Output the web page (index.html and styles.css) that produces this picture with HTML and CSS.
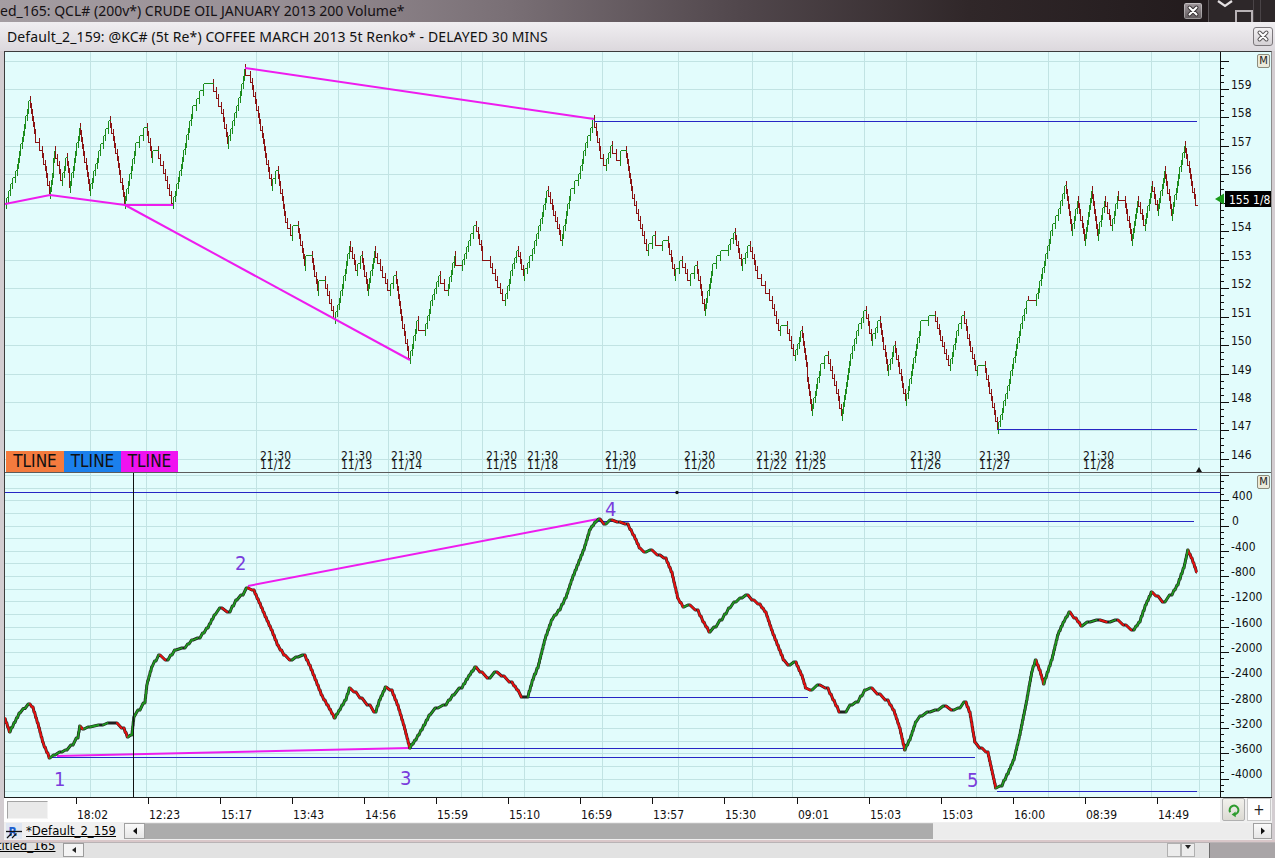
FILE: index.html
```html
<!DOCTYPE html>
<html lang="en">
<head>
<meta charset="utf-8">
<title>Default_2_159 - Coffee Renko</title>
<link rel="stylesheet" href="styles.css">
</head>
<body>
<div class="screen">
  <header class="outer-title">
    <span class="outer-text">ed_165: QCL# (200v*) CRUDE OIL JANUARY 2013 200 Volume*</span>
    <div class="outer-close">
      <svg viewBox="0 0 18 16" width="18" height="16"><path class="x-dark" d="M5.5 4.5L12.5 11.5M12.5 4.5L5.5 11.5"/><path class="x-light" d="M5.5 4.5L12.5 11.5M12.5 4.5L5.5 11.5"/></svg>
    </div>
    <div class="other-win">
      <svg viewBox="0 0 67 22" width="67" height="22">
        <path d="M0.5 0V22" stroke="#5a5457"/>
        <path d="M10 1L17 6L24 1" fill="none" stroke="#e4e0e2" stroke-width="2.2"/>
        <rect x="28" y="11" width="16" height="12" fill="none" stroke="#b8b2b5" stroke-width="2"/>
        <path d="M45.5 0V22M52.5 0V22" stroke="#4a4447"/>
      </svg>
    </div>
  </header>

  <div class="window">
    <div class="inner-title">
      <span class="inner-title-text">Default_2_159: @KC# (5t Re*) COFFEE MARCH 2013 5t Renko* - DELAYED 30 MINS</span>
      <div class="inner-close">
        <svg viewBox="0 0 18 17" width="18" height="17"><path class="x-dark2" d="M5.5 4.5L12.5 11.5M12.5 4.5L5.5 11.5"/><path class="x-light" d="M5.5 4.5L12.5 11.5M12.5 4.5L5.5 11.5"/></svg>
      </div>
    </div>

    <div class="body-frame">
      <div class="chart">
        <div class="pane pane-upper">
          <svg class="plot" viewBox="5 52 1215 420" width="1215" height="420">
            <g id="ugrid" class="grid"></g>
            <g id="ubars"></g>
            <polyline class="mag" points="5,204 50,195 125,205 173,205"/>
            <line class="mag" x1="125" y1="205" x2="410" y2="360"/>
            <line class="mag" x1="245" y1="68" x2="594" y2="119"/>
            <path class="navy" d="M594 121.5H1197M997 429.5H1197"/>
            <g class="dates">
              <text x="260" y="460">21:30</text><text x="260" y="469">11/12</text>
              <text x="341" y="460">21:30</text><text x="341" y="469">11/13</text>
              <text x="391" y="460">21:30</text><text x="391" y="469">11/14</text>
              <text x="486" y="460">21:30</text><text x="486" y="469">11/15</text>
              <text x="527" y="460">21:30</text><text x="527" y="469">11/18</text>
              <text x="605" y="460">21:30</text><text x="605" y="469">11/19</text>
              <text x="684" y="460">21:30</text><text x="684" y="469">11/20</text>
              <text x="756" y="460">21:30</text><text x="756" y="469">11/22</text>
              <text x="795" y="460">21:30</text><text x="795" y="469">11/25</text>
              <text x="910" y="460">21:30</text><text x="910" y="469">11/26</text>
              <text x="979" y="460">21:30</text><text x="979" y="469">11/27</text>
              <text x="1083" y="460">21:30</text><text x="1083" y="469">11/28</text>
            </g>
            <path class="mark" d="M1196 472L1199 467L1202 472Z"/>
          </svg>
          <svg class="axis" viewBox="1220 52 51 420" width="51" height="420">
            <path class="axis-line" d="M1220.5 52V472"/>
            <g id="uticks" class="ticks"></g>
            <g class="axis-lbl">
              <text x="1231" y="89">159</text>
              <text x="1231" y="117">158</text>
              <text x="1231" y="146">157</text>
              <text x="1231" y="174">156</text>
              <text x="1231" y="231">154</text>
              <text x="1231" y="260">153</text>
              <text x="1231" y="288">152</text>
              <text x="1231" y="317">151</text>
              <text x="1231" y="345">150</text>
              <text x="1231" y="374">149</text>
              <text x="1231" y="402">148</text>
              <text x="1231" y="430">147</text>
              <text x="1231" y="459">146</text>
            </g>
            <polygon class="mk-arrow" points="1215,199 1224,193.5 1224,204.5"/>
            <rect class="mk-box" x="1225" y="191" width="46" height="16"/>
            <text class="mk-text" x="1229" y="203.5">155 1/8</text>
          </svg>
          <div class="tlines">
            <span class="tline tl-orange">TLINE</span>
            <span class="tline tl-blue">TLINE</span>
            <span class="tline tl-magenta">TLINE</span>
          </div>
          <span class="mbtn">M</span>
        </div>

        <div class="pane pane-lower">
          <svg class="plot" viewBox="5 473 1215 324" width="1215" height="324">
            <g id="lgrid" class="grid"></g>
            <path class="navy" d="M5 492.5H1220M598 521.5H1194M527 697.5H808M410 748.5H905M50 757.5H975M997 791.5H1197"/>
            <line class="mag" x1="57" y1="756" x2="410" y2="748"/>
            <line class="mag" x1="248" y1="586" x2="598" y2="519"/>
            <g id="lbars"></g>
            <line class="cross" x1="133.5" y1="473" x2="133.5" y2="797"/>
            <circle class="dot" cx="677" cy="492.5" r="1.7"/>
            <g class="wave-num">
              <text x="54" y="786">1</text>
              <text x="235" y="570">2</text>
              <text x="400" y="785">3</text>
              <text x="605" y="516">4</text>
              <text x="967" y="787">5</text>
            </g>
          </svg>
          <svg class="axis" viewBox="1220 473 51 324" width="51" height="324">
            <path class="axis-line" d="M1220.5 473V797"/>
            <g id="lticks" class="ticks"></g>
            <g class="axis-lbl">
              <text x="1232" y="500">400</text>
              <text x="1232" y="525">0</text>
              <text x="1231" y="551">-400</text>
              <text x="1231" y="576">-800</text>
              <text x="1231" y="601">-1200</text>
              <text x="1231" y="627">-1600</text>
              <text x="1231" y="652">-2000</text>
              <text x="1231" y="677">-2400</text>
              <text x="1231" y="703">-2800</text>
              <text x="1231" y="728">-3200</text>
              <text x="1231" y="753">-3600</text>
              <text x="1231" y="778">-4000</text>
            </g>
          </svg>
          <span class="mbtn">M</span>
        </div>
      </div>

      <div class="time-axis">
        <div class="tscale">
          <div class="corner-box"></div>
          <svg class="tsvg" viewBox="48 798 1172 24" width="1172" height="24">
            <path class="tticks" d="M76.5 798V804M148.5 798V804M220.5 798V804M292.5 798V804M364.5 798V804M436.5 798V804M508.5 798V804M580.5 798V804M652.5 798V804M724.5 798V804M797.5 798V804M869.5 798V804M941.5 798V804M1013.5 798V804M1085.5 798V804M1157.5 798V804"/>
            <g class="tlabels">
              <text x="77" y="819">18:02</text>
              <text x="149" y="819">12:23</text>
              <text x="221" y="819">15:17</text>
              <text x="293" y="819">13:43</text>
              <text x="365" y="819">14:56</text>
              <text x="437" y="819">15:59</text>
              <text x="509" y="819">15:10</text>
              <text x="581" y="819">16:59</text>
              <text x="653" y="819">13:57</text>
              <text x="725" y="819">15:30</text>
              <text x="798" y="819">09:01</text>
              <text x="870" y="819">15:03</text>
              <text x="942" y="819">15:03</text>
              <text x="1014" y="819">16:00</text>
              <text x="1086" y="819">08:39</text>
              <text x="1158" y="819">14:49</text>
            </g>
          </svg>
        </div>
        <div class="tbtns">
          <div class="refresh">
            <svg viewBox="0 0 16 16" width="16" height="16"><path d="M4.2 10.2A4.4 4.4 0 1 1 8.6 12.4" fill="none" stroke="#2e9b2e" stroke-width="2"/><path d="M5.6 12.6L9.6 9.6L9.8 15.2Z" fill="#2e9b2e"/></svg>
          </div>
          <div class="plus">+</div>
        </div>
      </div>

      <div class="tabbar">
        <svg class="tab-icon" viewBox="0 0 16 16" width="16" height="16">
          <rect x="0" y="0" width="16" height="16" fill="#dfe6f2"/>
          <text class="ico-r" x="2.5" y="13">R</text>
          <path d="M0 8.5H16" stroke="#111" stroke-width="1.3"/>
          <path d="M1 15L5.5 10.5M6 15L10.5 10.5" stroke="#111" stroke-width="1.2"/>
        </svg>
        <span class="tab-name">*Default_2_159</span>
        <div class="hscroll">
          <div class="sb-btn"><svg viewBox="0 0 8 8" width="8" height="8"><path d="M6 0.5V7.5L2 4Z" fill="#111"/></svg></div>
          <div class="sb-thumb"></div>
          <div class="sb-track"></div>
          <div class="sb-btn sb-right"><svg viewBox="0 0 8 8" width="8" height="8"><path d="M2 0.5V7.5L6 4Z" fill="#111"/></svg></div>
        </div>
      </div>
    </div>
  </div>

  <footer class="bottom-strip">
    <span class="bs-tab">titled_165</span>
    <div class="bs-btn"><svg viewBox="0 0 8 8" width="8" height="8"><path d="M6 1V7L2 4Z" fill="#222"/></svg></div>
    <div class="bs-spacer"></div>
    <div class="bs-box"></div>
    <div class="bs-box bs-arrow"><svg viewBox="0 0 8 6" width="8" height="6"><path d="M1 1H7L4 5Z" fill="#222"/></svg></div>
    <div class="bs-frame"></div>
  </footer>
</div>
<script src="script.js"></script>
</body>
</html>
```

FILE: styles.css
```css
* { box-sizing: border-box; margin: 0; padding: 0; }
html, body { width: 1275px; height: 858px; overflow: hidden; background: #c9c3c7; }
body {
  font-family: "DejaVu Sans Condensed", "DejaVu Sans", sans-serif;
  font-stretch: condensed;
  color: #000;
}
.screen { width: 1275px; height: 858px; display: flex; flex-direction: column; }

/* outer (background) window title */
.outer-title {
  height: 22px; flex: none; display: flex; align-items: center;
  background: linear-gradient(to right, #a49da2 0%, #978e94 22%, #796f75 40%, #51474c 58%, #302729 76%, #1e1719 100%);
}
.outer-text {
  flex: 1; font-family: "Noto Sans", "Open Sans", sans-serif; font-stretch: normal;
  font-size: 14px; line-height: 22px; color: #151114; white-space: nowrap; overflow: hidden;
}
.outer-close {
  width: 20px; height: 18px; margin-right: 5px; border: 1px solid #221c1e; border-radius: 3px;
  background: linear-gradient(#a29a9e, #615a5d); box-shadow: inset 0 0 0 1px rgba(255,255,255,0.35);
}
.outer-close svg, .inner-close svg, .other-win svg { display: block; }
.x-dark { stroke: #3a3436; stroke-width: 4; stroke-linecap: round; fill: none; }
.x-dark2 { stroke: #5a5658; stroke-width: 4; stroke-linecap: round; fill: none; }
.x-light { stroke: #ffffff; stroke-width: 2; stroke-linecap: round; fill: none; }
.other-win { width: 67px; height: 22px; background: #2d2729; }

/* chart window */
.window { height: 820px; flex: none; display: flex; flex-direction: column; background: #d3cdd1; border-bottom: 2px solid #d9c7c9; }
.inner-title {
  height: 29px; flex: none; display: flex; align-items: center; padding-left: 7px;
  background: linear-gradient(#f0eef1, #e5e2e6 55%, #dcd8dd);
}
.inner-title-text {
  flex: 1; font-family: "Noto Sans", "Open Sans", sans-serif; font-stretch: normal;
  font-size: 14px; letter-spacing: 0.1px; color: #111; white-space: nowrap;
}
.inner-close {
  width: 20px; height: 19px; margin-right: 2px; border: 1px solid #7c787c; border-radius: 3px;
  background: linear-gradient(#f4f2f4, #d4d0d4);
}
.body-frame { flex: 1; display: flex; flex-direction: column; padding: 0 3px 0 4px; }

.chart {
  height: 746px; flex: none; display: flex; flex-direction: column; background: #e2fcfc;
  border-top: 1px solid #3c3c3c; border-left: 1px solid #3c3c3c; border-right: 1px solid #8c8c8c;
}
.pane { display: flex; position: relative; flex: none; }
.pane-upper { height: 420px; }
.pane-lower { height: 325px; border-top: 1px solid #5c5c5c; }
.plot { width: 1215px; height: 100%; display: block; flex: none; }
.axis { width: 51px; height: 100%; display: block; flex: none; overflow: visible; }

.grid path { stroke: #c1e3e3; stroke-width: 1; fill: none; shape-rendering: crispEdges; }
.up { stroke: #1b8c1b; stroke-width: 1; fill: none; shape-rendering: crispEdges; }
.down { stroke: #8a1212; stroke-width: 1; fill: none; shape-rendering: crispEdges; }
.lo-under { stroke: #202020; stroke-width: 3; fill: none; stroke-linejoin: round; }
.lo-up { stroke: #1f9a1f; stroke-width: 1.8; fill: none; stroke-linecap: round; }
.lo-down { stroke: #e41010; stroke-width: 2; fill: none; stroke-linecap: round; }
.mag { stroke: #ee1cee; stroke-width: 2; fill: none; }
.navy { stroke: #2626c4; stroke-width: 1; fill: none; shape-rendering: crispEdges; }
.cross { stroke: #111; stroke-width: 1; shape-rendering: crispEdges; }
.dot { fill: #111; }
.mark { fill: #111; }
.dates text { font-size: 12px; fill: #141414; }
.wave-num text { font-size: 20px; fill: #7a3cdc; }

.axis-line { stroke: #111; stroke-width: 1; shape-rendering: crispEdges; }
.ticks path { stroke: #111; stroke-width: 1; fill: none; shape-rendering: crispEdges; }
.axis-lbl text { font-size: 12px; fill: #111; }
.mk-arrow { fill: #1a9a1a; }
.mk-box { fill: #000; }
.mk-text { font-size: 12px; fill: #fff; }

.tlines { position: absolute; left: 1px; top: 399px; display: flex; height: 21px; }
.tline { width: 57px; height: 21px; font-size: 17px; line-height: 21px; text-align: center; color: #111; }
.tl-orange { background: #f47b3e; width: 58px; }
.tl-blue { background: #1b80ec; }
.tl-magenta { background: #f012f0; }
.mbtn {
  position: absolute; right: 1px; top: 2px; width: 13px; height: 14px;
  border: 1px solid #8c8c7c; border-radius: 2px; background: #ecebdc;
  font-size: 11px; line-height: 12px; text-align: center; color: #222;
}

/* time axis */
.time-axis { height: 25px; flex: none; display: flex; border-top: 1px solid #1e1e1e; background: #fff; }
.tscale { width: 1216px; flex: none; display: flex; background: #fff; }
.corner-box {
  width: 41px; height: 18px; margin: 3px 0 0 3px; background: #e9e9e9;
  border: 1px solid #a4a4a4; border-right-color: #f4f4f4; border-bottom-color: #f4f4f4;
}
.tsvg { width: 1172px; height: 24px; display: block; }
.tticks { stroke: #111; stroke-width: 1; shape-rendering: crispEdges; }
.tlabels text { font-size: 12px; fill: #111; }
.tbtns { flex: 1; display: flex; gap: 2px; padding-left: 2px; background: #f0f0f0; }
.refresh {
  width: 23px; height: 23px; border: 1px solid #b0b0b0; border-radius: 2px;
  background: linear-gradient(#f2f1ec, #dcdad3); display: flex; align-items: center; justify-content: center;
}
.plus {
  width: 24px; height: 23px; border: 1px solid #c8c8c8; background: #fff;
  font-size: 15px; display: flex; align-items: center; justify-content: center; color: #222;
}

/* tab bar & scrollbar */
.tabbar { height: 18px; flex: none; display: flex; align-items: center; background: #f0f0f0; }
.tab-icon { width: 16px; height: 16px; margin-left: 2px; display: block; flex: none; overflow: hidden; }
.ico-r { font-family: "DejaVu Sans", sans-serif; font-weight: bold; font-size: 12px; fill: #1d5fcf; }
.tab-name { margin-left: 4px; width: 94px; flex: none; font-size: 13px; line-height: 16px; text-decoration: underline; white-space: nowrap; }
.hscroll { flex: 1; height: 16px; display: flex; margin-left: 4px; }
.sb-btn {
  width: 21px; flex: none; border: 1px solid #a0a0a0; background: linear-gradient(#fafafa, #e6e6e6);
  display: flex; align-items: center; justify-content: center;
}
.sb-btn svg { display: block; }
.sb-right { width: 19px; }
.sb-thumb { width: 788px; flex: none; background: #acacac; border-top: 1px solid #bcbcbc; }
.sb-track { flex: 1; background: #ececec; }

/* bottom strip (window behind) */
.bottom-strip { height: 16px; flex: none; display: flex; background: #e2e2e2; overflow: hidden; border-top: 1px solid #b9b3b5; }
.bs-tab { margin-top: -6px; margin-left: -3px; width: 62px; flex: none; font-size: 13px; line-height: 18px; text-decoration: underline; white-space: nowrap; }
.bs-btn {
  width: 21px; height: 14px; margin-left: 4px; flex: none; border: 1px solid #9c9c9c; background: #f4f4f4;
  display: flex; align-items: center; justify-content: center;
}
.bs-btn svg, .bs-arrow svg { display: block; }
.bs-spacer { flex: 1; }
.bs-box { width: 14px; height: 14px; border: 1px solid #b0b0b0; background: #ececec; flex: none; }
.bs-arrow { margin-right: 14px; display: flex; align-items: flex-start; justify-content: center; }
.bs-frame { width: 66px; flex: none; background: #a9a5a7; border-left: 1px solid #6c6c6c; }
```

FILE: script.js
```js
(function () {
  var NS = 'http://www.w3.org/2000/svg';
  function add(parent, tag, attrs) {
    var e = document.createElementNS(NS, tag);
    for (var k in attrs) e.setAttribute(k, attrs[k]);
    parent.appendChild(e);
    return e;
  }
  var VX = [90, 146, 176, 256, 338, 388, 461, 482, 524, 602, 678, 752, 792, 864, 906, 976, 1048, 1079, 1151, 1199];
  function uy(p) { return 89 + (159 - p) * 28.45; }
  function ly(v) { return 525.5 - v / 400 * 25.3; }

  // grids
  var d = '', y, i;
  for (var p = 146; p <= 160; p++) { y = Math.round(uy(p)) + 0.5; if (y > 52 && y < 472) d += 'M5 ' + y + 'H1220'; }
  VX.forEach(function (x) { d += 'M' + (x + 0.5) + ' 52V472'; });
  add(document.getElementById('ugrid'), 'path', { d: d });

  d = '';
  for (var v = -4400; v <= 800; v += 200) { y = Math.round(ly(v)) + 0.5; if (y > 473 && y < 797) d += 'M5 ' + y + 'H1220'; }
  VX.forEach(function (x) { d += 'M' + (x + 0.5) + ' 473V797'; });
  add(document.getElementById('lgrid'), 'path', { d: d });

  // ticks
  d = '';
  for (var q = 145.5; q <= 160.01; q += 0.25) {
    y = Math.round(uy(q)) + 0.5;
    if (y < 53 || y > 471) continue;
    d += 'M1220 ' + y + (Math.abs(q - Math.round(q)) < 0.01 ? 'H1229' : 'H1224');
  }
  add(document.getElementById('uticks'), 'path', { d: d });
  d = '';
  for (v = -4400; v <= 800; v += 100) {
    y = Math.round(ly(v)) + 0.5;
    if (y < 474 || y > 796) continue;
    d += 'M1220 ' + y + (v % 400 === 0 ? 'H1229' : 'H1224');
  }
  add(document.getElementById('lticks'), 'path', { d: d });

  // upper renko bricks
  var U = [[6,203],[10,190],[17,170],[25,123],[30,100],[35,133],[42,150],[47,177],[50,193],[55,150],[62,180],[67,157],[70,187],[80,127],[90,190],[100,150],[110,120],[118,160],[125,203],[135,150],[147,127],[152,157],[158,150],[167,180],[173,203],[182,163],[192,113],[203,90],[213,83],[223,113],[228,143],[240,97],[245,68],
    [250,75],[258,110],[265,150],[272,185],[278,170],[285,215],[292,235],[298,225],[305,265],[312,255],[318,290],[325,280],[335,318],[342,290],[350,245],[357,270],[362,255],[368,290],[375,250],[382,270],[390,290],[396,275],[402,320],[410,358],[418,320],[425,330],[432,300],[440,275],[448,290],[455,255],[462,265],[470,240],[476,225],[482,250],[490,260],[497,280],[505,300],[512,270],[518,250],[524,275],[532,255],[540,225],[548,190],[555,215],[562,240],[570,195],[578,180],[585,150],[594,119],
    [600,150],[606,165],[612,145],[620,160],[626,150],[632,190],[640,220],[648,250],[655,235],[662,245],[668,240],[675,275],[682,260],[690,280],[697,265],[705,310],[712,270],[720,255],[728,250],[735,232],[742,265],[750,245],[757,270],[765,285],[772,300],[780,330],[787,325],[795,355],[802,330],[812,410],[820,370],[828,355],[836,385],[842,415],[850,360],[858,330],[866,310],[872,340],[880,320],[888,370],[895,345],[902,380],[906,400],[912,370],[920,330],[928,320],[935,315],[942,340],[950,365],[958,330],[964,315],[970,345],[977,370],[985,365],[992,400],[998,428],
    [1005,400],[1012,370],[1020,330],[1028,300],[1036,300],[1045,260],[1052,230],[1058,215],[1066,185],[1072,230],[1078,200],[1085,240],[1092,190],[1098,235],[1105,200],[1112,225],[1118,195],[1125,200],[1132,240],[1138,200],[1145,225],[1152,185],[1158,210],[1165,170],[1172,215],[1178,180],[1185,145],[1192,185],[1197,205]];
  var g = '', r = '', h = 7.1, ext = 5;
  for (i = 0; i < U.length - 1; i++) {
    var x0 = U[i][0], y0 = U[i][1], x1 = U[i + 1][0], y1 = U[i + 1][1];
    var dy = y1 - y0;
    var n = Math.max(1, Math.round(Math.abs(dy) / h));
    var dx = (x1 - x0) / n;
    var sg = dy < 0 ? -1 : 1;
    for (var k = 0; k < n; k++) {
      var xa = Math.round(x0 + dx * k) + 0.5;
      var xb = Math.round(x0 + dx * (k + 1)) + 0.5;
      var ya = Math.round(y0 + dy * k / n) + 0.5;
      var yb = Math.round(y0 + dy * (k + 1) / n) + 0.5;
      var start = ya - sg * ext;
      var s = 'M' + xa + ' ' + start + 'V' + yb + 'M' + xa + ' ' + yb + 'H' + xb;
      if (dy < 0) g += s; else r += s;
    }
  }
  var ub = document.getElementById('ubars');
  add(ub, 'path', { d: r, 'class': 'down' });
  add(ub, 'path', { d: g, 'class': 'up' });

  // lower cumulative line
  var L = [[5,718],[10,732],[20,713],[30,704],[33,707],[38,723],[43,742],[50,758],[55,755],[62,752],[67,750],[73,745],[78,738],[80,726],[84,729],[90,727],[103,725],[110,723],[117,723],[124,728],[128,737],[132,735],[134,717],[140,710],[145,703],[147,685],[152,667],[160,655],[168,660],[176,650],[185,648],[193,640],[200,638],[208,628],[215,615],[222,608],[230,612],[237,600],[243,595],[248,588],[254,590],[260,603],[266,617],[272,630],[278,645],[285,655],[292,660],[298,657],[305,655],[310,665],[316,680],[322,695],[328,705],[335,718],[340,710],[346,700],[350,688],[356,692],[362,698],[370,705],[376,712],[380,700],[386,687],[392,690],[398,705],[404,725],[410,748],[416,740],[422,730],[430,715],[438,708],[446,705],[454,695],[462,688],[470,675],[476,667],[482,672],[490,678],[497,672],[504,676],[512,682],[518,690],[523,697],[528,697],[533,680],[538,668],[545,640],[552,620],[560,610],[566,598],[572,580],[578,565],[584,550],[590,530],[596,522],[600,519],[606,524],[612,520],[620,522],[628,524],[634,535],[640,548],[646,552],[652,550],[660,555],[666,558],[672,572],[678,598],[684,607],[690,605],[698,610],[704,622],[710,632],[716,627],[722,620],[730,608],[736,602],[742,598],[748,595],[754,600],[760,604],[766,612],[772,630],[778,645],[784,660],[790,665],[796,662],[802,675],[806,688],[812,690],[820,685],[828,688],[834,700],[840,712],[846,712],[852,705],[858,702],[866,690],[872,688],[880,694],[888,700],[894,710],[900,728],[905,750],[910,740],[916,722],[922,716],[930,712],[938,710],[946,706],[954,710],[960,708],[966,702],[970,712],[975,742],[982,748],[988,752],[992,770],[996,788],[1002,786],[1008,774],[1014,760],[1020,735],[1026,705],[1032,672],[1036,660],[1040,670],[1044,684],[1048,672],[1052,660],[1058,635],[1064,622],[1070,612],[1076,618],[1082,626],[1090,622],[1100,620],[1110,622],[1118,620],[1126,625],[1134,630],[1140,622],[1146,605],[1152,592],[1158,596],[1165,602],[1172,595],[1178,585],[1184,568],[1188,550],[1192,558],[1197,572]];
  var S = [L[0]];
  for (i = 0; i < L.length - 1; i++) {
    var ax = L[i][0], ay = L[i][1], bx = L[i + 1][0], by = L[i + 1][1];
    var m = Math.max(1, Math.round(Math.abs(by - ay) / 5));
    for (var j = 1; j <= m; j++) {
      var px = ax + (bx - ax) * j / m, py = ay + (by - ay) * j / m;
      S.push([+(px - (bx - ax) / m * 0.35).toFixed(1), +py.toFixed(1)]);
      S.push([+px.toFixed(1), +py.toFixed(1)]);
    }
  }
  var lb = document.getElementById('lbars');
  var under = 'M' + S.map(function (pt) { return pt[0] + ' ' + pt[1]; }).join('L');
  add(lb, 'path', { d: under, 'class': 'lo-under' });
  var lg = '', lr = '';
  for (i = 0; i < S.length - 1; i++) {
    if (S[i + 1][1] === S[i][1]) continue;
    var seg = 'M' + S[i][0] + ' ' + S[i][1] + 'L' + S[i + 1][0] + ' ' + S[i + 1][1];
    if (S[i + 1][1] < S[i][1]) lg += seg; else lr += seg;
  }
  add(lb, 'path', { d: lr, 'class': 'lo-down' });
  add(lb, 'path', { d: lg, 'class': 'lo-up' });
})();
```
